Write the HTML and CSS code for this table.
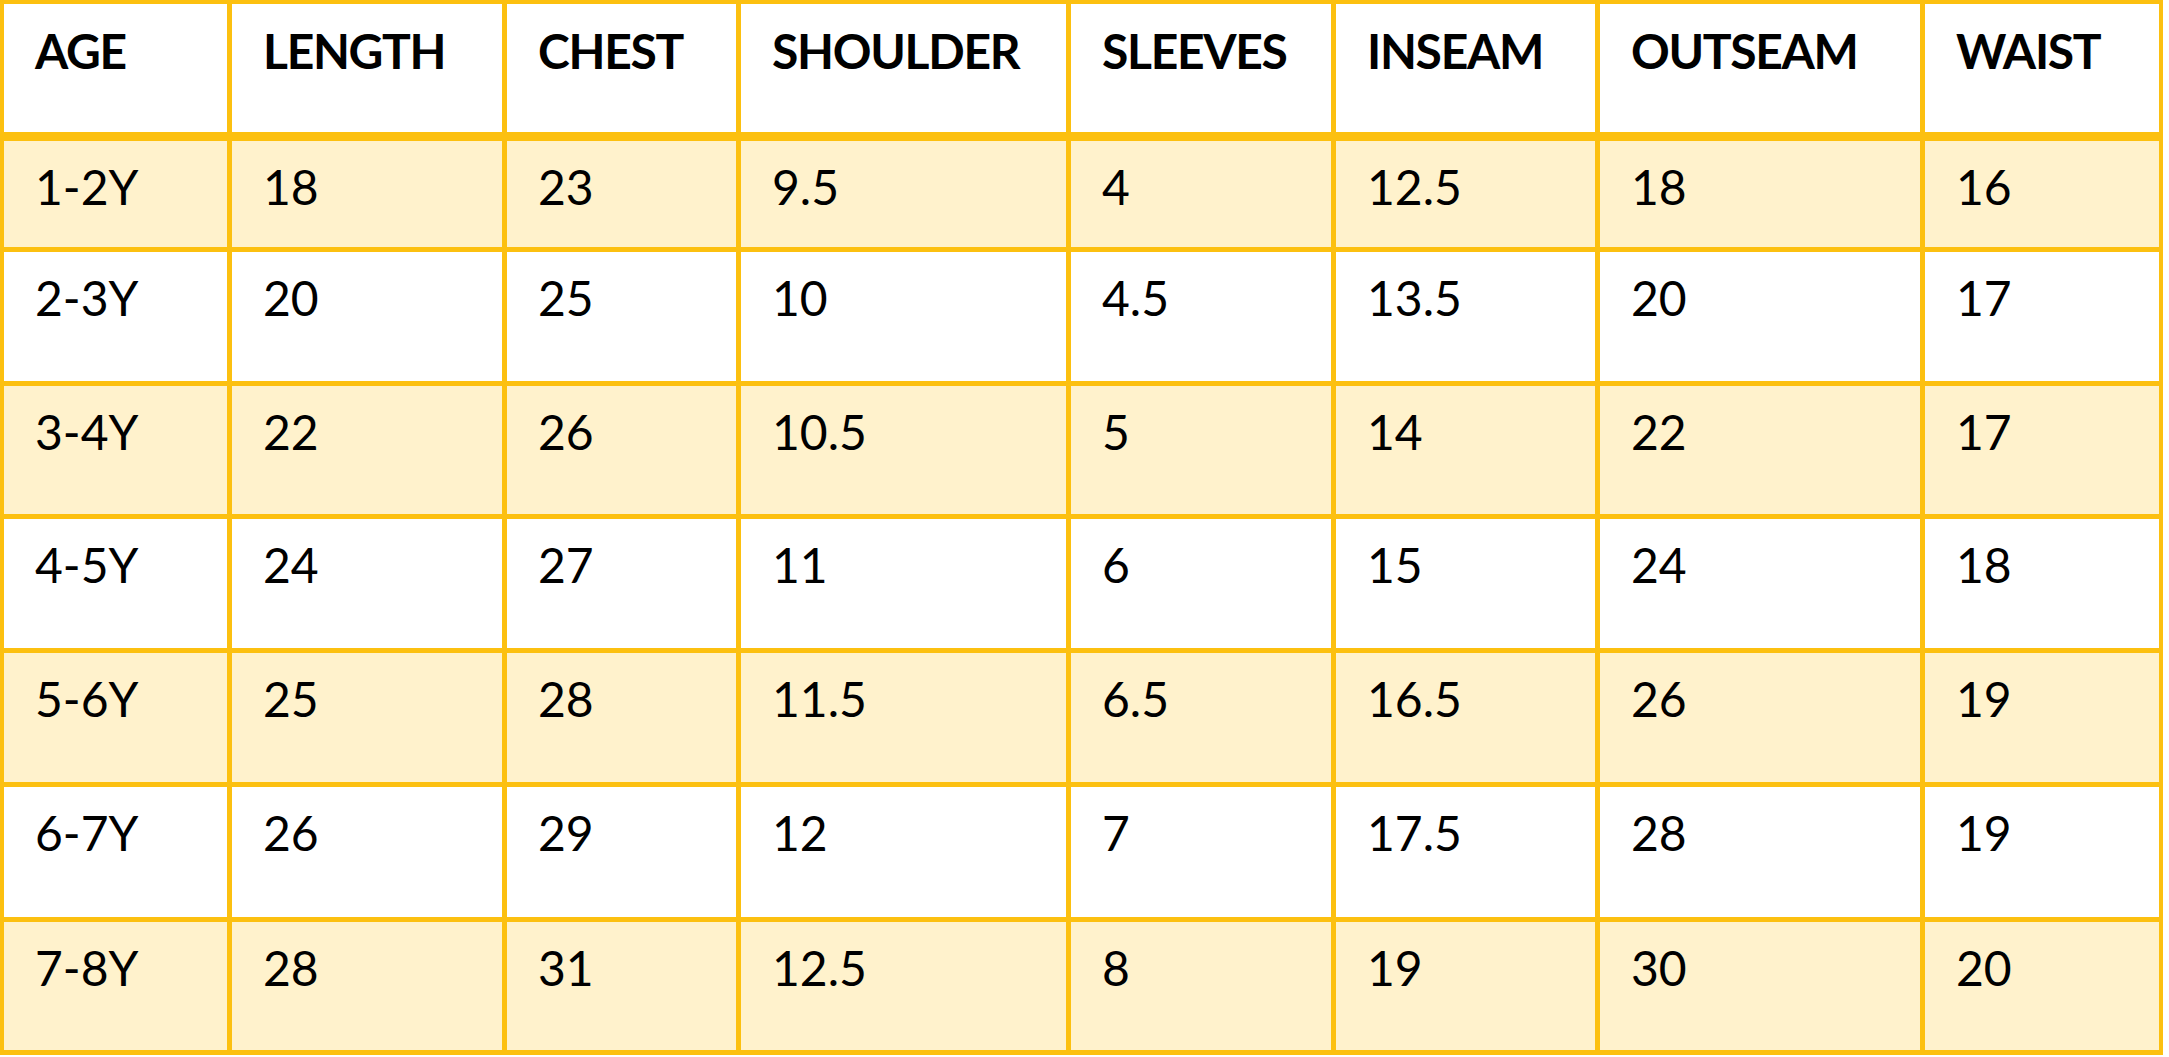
FILE: index.html
```html
<!DOCTYPE html>
<html lang="en">
<head>
<meta charset="utf-8">
<title>Size Chart</title>
<link rel="stylesheet" href="styles.css">
</head>
<body>
<div class="chart">
  <div class="cell head">AGE</div>
  <div class="cell head">LENGTH</div>
  <div class="cell head">CHEST</div>
  <div class="cell head">SHOULDER</div>
  <div class="cell head">SLEEVES</div>
  <div class="cell head">INSEAM</div>
  <div class="cell head">OUTSEAM</div>
  <div class="cell head">WAIST</div>

  <div class="cell tint">1-2Y</div><div class="cell tint">18</div><div class="cell tint">23</div><div class="cell tint">9.5</div><div class="cell tint">4</div><div class="cell tint">12.5</div><div class="cell tint">18</div><div class="cell tint">16</div>
  <div class="cell">2-3Y</div><div class="cell">20</div><div class="cell">25</div><div class="cell">10</div><div class="cell">4.5</div><div class="cell">13.5</div><div class="cell">20</div><div class="cell">17</div>
  <div class="cell tint">3-4Y</div><div class="cell tint">22</div><div class="cell tint">26</div><div class="cell tint">10.5</div><div class="cell tint">5</div><div class="cell tint">14</div><div class="cell tint">22</div><div class="cell tint">17</div>
  <div class="cell">4-5Y</div><div class="cell">24</div><div class="cell">27</div><div class="cell">11</div><div class="cell">6</div><div class="cell">15</div><div class="cell">24</div><div class="cell">18</div>
  <div class="cell tint">5-6Y</div><div class="cell tint">25</div><div class="cell tint">28</div><div class="cell tint">11.5</div><div class="cell tint">6.5</div><div class="cell tint">16.5</div><div class="cell tint">26</div><div class="cell tint">19</div>
  <div class="cell">6-7Y</div><div class="cell">26</div><div class="cell">29</div><div class="cell">12</div><div class="cell">7</div><div class="cell">17.5</div><div class="cell">28</div><div class="cell">19</div>
  <div class="cell tint">7-8Y</div><div class="cell tint">28</div><div class="cell tint">31</div><div class="cell tint">12.5</div><div class="cell tint">8</div><div class="cell tint">19</div><div class="cell tint">30</div><div class="cell tint">20</div>
</div>
</body>
</html>
```
FILE: styles.css
```css
html, body {
  margin: 0;
  padding: 0;
  background: #ffffff;
}

.chart {
  display: grid;
  width: max-content;
  grid-template-columns: 223px 270px 229px 325px 260px 259px 320px 234px;
  grid-template-rows: 132px 106px 129px 128px 129px 129px 130px 128px;
  gap: 5px;
  padding: 4px 4px 5px 4px;
  background: #fcc010;
  font-family: Lato, "Open Sans", "Liberation Sans", sans-serif;
  color: #000000;
}

.cell {
  background: #ffffff;
  font-size: 48px;
  line-height: 1;
  padding: 22px 0 0 31px;
  box-sizing: border-box;
}

.head {
  font-weight: 700;
  padding-top: 23px;
  letter-spacing: -1.3px;
  border-bottom: 4px solid #fcc010;
}

.tint {
  background: #fff2cc;
}
```
